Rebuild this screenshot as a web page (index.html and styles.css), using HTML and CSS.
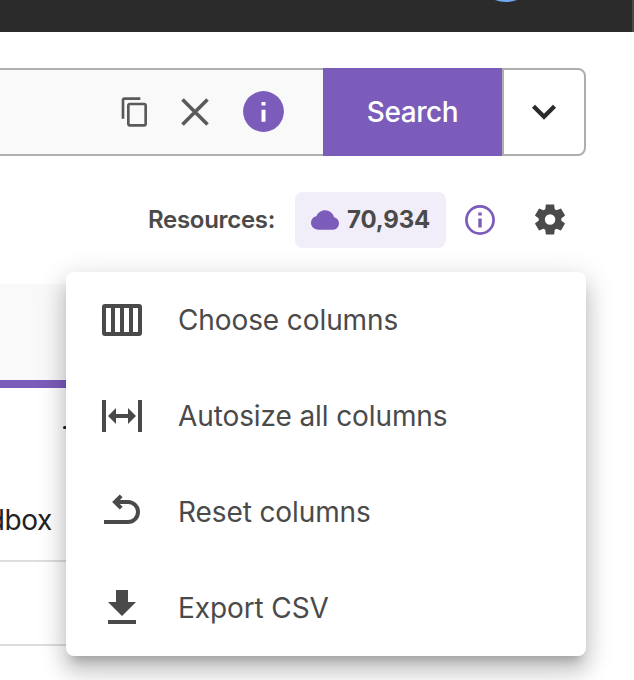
FILE: index.html
```html
<!DOCTYPE html>
<html lang="en">
<head>
<meta charset="utf-8">
<title>Resources</title>
<link rel="stylesheet" href="styles.css">
</head>
<body>
<header class="topbar"><span class="avatar"></span><span class="topbar-edge"></span></header>

<div class="search">
  <div class="search-field">
    <svg class="icon-copy" viewBox="0 0 24 24"><path d="M16 1H4c-1.1 0-2 .9-2 2v14h2V3h12V1zm3 4H8c-1.1 0-2 .9-2 2v14c0 1.1.9 2 2 2h11c1.1 0 2-.9 2-2V7c0-1.1-.9-2-2-2zm0 16H8V7h11v14z"/></svg>
    <svg class="icon-clear" viewBox="0 0 28 28"><path d="M1.5 1.5l25 25M26.5 1.5l-25 25"/></svg>
    <svg class="icon-info-solid" viewBox="0 0 41 41"><circle cx="20.500" cy="20.500" r="20.400"/><path d="M18.500 11h4v3.600h-4zM18.500 18.800h4v12h-4z" fill="#fff"/></svg>
  </div>
  <button class="search-button">Search</button>
  <button class="search-more"><svg viewBox="0 0 26 18"><path d="M2.5 3.2L13 13.7 23.500 3.200"/></svg></button>
</div>

<div class="summary">
  <span class="summary-label">Resources:</span>
  <span class="count"><svg class="icon-cloud" viewBox="0 0 28 20"><path d="M8 19.700C3.200 19.700 0 16.700 0 13 0 9.500 2.300 7 5.300 6.300 7 2.700 10.200.300 14 .300c4.600 0 8 3 9.100 7 2.900.700 4.900 3.100 4.900 5.900 0 3.600-2.700 6.500-6 6.500z"/></svg><span class="count-value">70,934</span></span>
  <svg class="icon-info" viewBox="0 0 30 30"><circle cx="15" cy="15" r="13.600"/><path d="M13.300 7.500h3.400v3h-3.400zM13.300 13.500h3.400v9h-3.400z"/></svg>
  <svg class="icon-gear" viewBox="80 -880 800 800"><path d="m370-80-16-128q-13-5-24.500-12T307-235l-119 50L78-375l103-78q-1-7-1-13.500v-27q0-6.500 1-13.500L78-585l110-190 119 50q11-8 23-15t24-12l16-128h220l16 128q13 5 24.500 12t22.500 15l119-50 110 190-103 78q1 7 1 13.500v27q0 6.500-2 13.500l103 78-110 190-118-50q-11 8-23 15t-24 12L590-80H370Zm112-260q58 0 99-41t41-99q0-58-41-99t-99-41q-59 0-99.500 41T342-480q0 58 40.500 99t99.500 41Z"/></svg>
</div>

<main class="table">
  <div class="table-head"></div>
  <div class="table-row row-empty"><span class="dash"></span></div>
  <div class="table-row row-name">dbox</div>
  <div class="table-row"></div>
</main>

<div class="menu">
  <div class="menu-item"><svg viewBox="0 0 48 48"><path fill-rule="evenodd" d="M7 8h34a3 3 0 0 1 3 3v26a3 3 0 0 1-3 3H7a3 3 0 0 1-3-3V11a3 3 0 0 1 3-3zM8 12v24h5V12zM17 12v24h5V12zM26 12v24h5V12zM35 12v24h5V12z"/></svg>Choose columns</div>
  <div class="menu-item"><svg viewBox="0 0 48 48"><path d="M4 8h4v32H4zM40 8h4v32h-4zM10 24l8-8v6h12v-6l8 8-8 8v-6H18v6z"/></svg>Autosize all columns</div>
  <div class="menu-item"><svg viewBox="0 0 48 48"><path class="stroke" d="M6 34h24a10 10 0 0 0 0-20H17M23.200 7.800L17 14l6.200 6.200"/></svg>Reset columns</div>
  <div class="menu-item"><svg viewBox="0 0 24 24"><path d="M19 9h-4V3H9v6H5l7 7 7-7zM5 18v2h14v-2H5z"/></svg>Export CSV</div>
</div>
</body>
</html>
```
FILE: styles.css
```css
* { box-sizing: border-box; }
body {
  margin: 0;
  width: 634px;
  height: 680px;
  overflow: hidden;
  position: relative;
  background: #fff;
  color: #4a4a4a;
  font-family: Inter, "Liberation Sans", sans-serif;
}
svg { display: block; flex: none; fill: currentColor; }
button { margin: 0; padding: 0; border: 0; font: inherit; }

.topbar {
  position: relative;
  display: flex;
  justify-content: flex-end;
  height: 32px;
  overflow: hidden;
  background: #2b2b2b;
}
.avatar {
  position: absolute;
  left: 474px;
  top: -62px;
  width: 64px;
  height: 64px;
  border-radius: 50%;
  background: #6eaaf0;
}
.topbar-edge { width: 2px; background: #4b4b4b; }

.search {
  display: flex;
  width: 586px;
  height: 88px;
  margin-top: 36px;
}
.search-field {
  display: flex;
  align-items: center;
  width: 323px;
  padding-left: 119px;
  border: solid #aeaeae;
  border-width: 2px 0;
  background: #f9f9f9;
  color: #5a5a5a;
}
.icon-copy { width: 32px; height: 32px; }
.icon-clear { width: 28px; height: 28px; margin-left: 30px; fill: none; stroke: currentColor; stroke-width: 3.6; }
.icon-info-solid { width: 41px; height: 41px; margin-left: 34px; margin-bottom: 1px; color: #7b5cba; }
.search-button {
  width: 179px;
  background: #7b5cba;
  color: #fff;
  font-size: 28px;
  font-weight: 500;
  letter-spacing: -0.4px;
}
.search-more {
  display: flex;
  align-items: center;
  justify-content: center;
  width: 84px;
  border: 2px solid #aeaeae;
  border-radius: 0 8px 8px 0;
  background: #fff;
  color: #2b2b2b;
}
.search-more svg { width: 26px; height: 18px; fill: none; stroke: currentColor; stroke-width: 4.4; }

.summary {
  display: flex;
  align-items: center;
  height: 56px;
  margin-top: 36px;
  padding-left: 148px;
  font-size: 24px;
  font-weight: 600;
}
.summary-label { width: 147px; padding-bottom: 2px; letter-spacing: -0.3px; white-space: nowrap; }
.count {
  display: flex;
  align-items: center;
  width: 151px;
  height: 56px;
  padding-left: 16px;
  border-radius: 8px;
  background: #f1eef9;
}
.count-value { margin-left: 8px; padding-bottom: 2px; font-weight: 700; letter-spacing: -0.15px; }
.icon-cloud { width: 28px; height: 20px; color: #7b5cba; }
.icon-info { width: 30px; height: 30px; margin-left: 19px; color: #7b5cba; }
.icon-info circle { fill: none; stroke: currentColor; stroke-width: 2.7; }
.icon-gear { width: 30px; height: 31px; margin: 0 0 1px 40px; overflow: visible; }

.table { width: 586px; margin-top: 36px; color: #222; }
.table-head { height: 104px; border-bottom: 8px solid #7b5cba; background: #f9f9f9; }
.table-row {
  display: flex;
  align-items: center;
  height: 84px;
  border-bottom: 2px solid #ddd;
}
.row-empty { height: 90px; border: 0; padding-left: 63px; }
.dash { width: 12px; height: 3px; margin-bottom: 11px; border-radius: 2px; background: #222; }
.row-name {
  justify-content: flex-end;
  padding: 2px 534px 0 0;
  white-space: nowrap;
  font-size: 28px;
  letter-spacing: -0.4px;
}

.menu {
  position: absolute;
  left: 66px;
  top: 272px;
  width: 520px;
  height: 384px;
  border-radius: 8px;
  background: #fff;
  box-shadow: 0 10px 10px -6px rgba(0, 0, 0, .2), 0 16px 20px 2px rgba(0, 0, 0, .14), 0 6px 28px 4px rgba(0, 0, 0, .12);
}
.menu-item {
  display: flex;
  align-items: center;
  gap: 32px;
  height: 96px;
  padding-left: 32px;
  font-size: 28px;
  letter-spacing: -0.1px;
  white-space: nowrap;
}
.menu-item svg { width: 48px; height: 48px; }
.menu-item .stroke { fill: none; stroke: currentColor; stroke-width: 4; }
```
